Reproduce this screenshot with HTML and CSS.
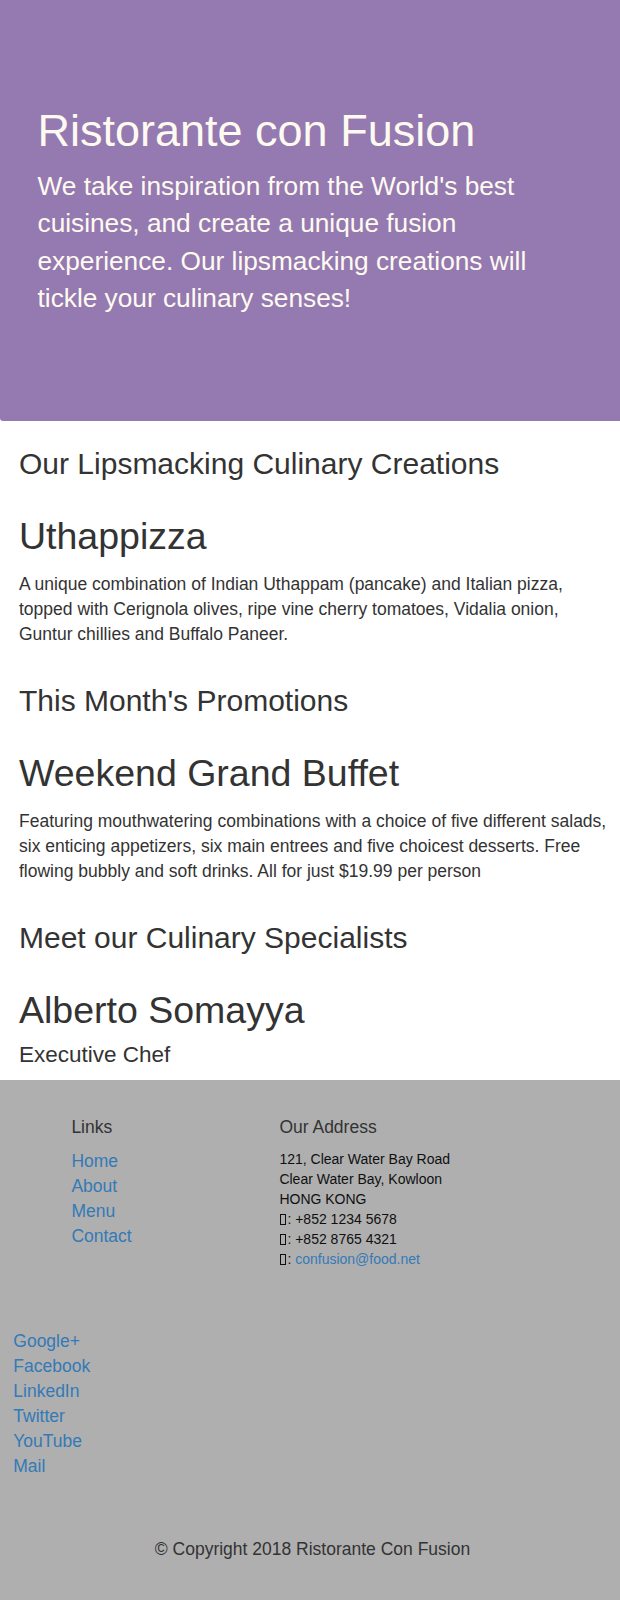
FILE: index.html
```html
<!DOCTYPE html>
<html lang="en">
<head>
<meta charset="utf-8">
<title>Ristorante con Fusion</title>
<link rel="stylesheet" href="styles.css">
</head>
<body>
<header class="jumbotron">
  <h1 class="jumbo-title">Ristorante con Fusion</h1>
  <p class="jumbo-lead">We take inspiration from the World's best cuisines, and create a unique fusion experience. Our lipsmacking creations will tickle your culinary senses!</p>
</header>

<main class="content">
  <section class="block">
    <h3 class="section-title">Our Lipsmacking Culinary Creations</h3>
    <h2 class="item-title">Uthappizza</h2>
    <p class="item-text">A unique combination of Indian Uthappam (pancake) and Italian pizza, topped with Cerignola olives, ripe vine cherry tomatoes, Vidalia onion, Guntur chillies and Buffalo Paneer.</p>
  </section>
  <section class="block">
    <h3 class="section-title spaced">This Month's Promotions</h3>
    <h2 class="item-title">Weekend Grand Buffet</h2>
    <p class="item-text">Featuring mouthwatering combinations with a choice of five different salads, six enticing appetizers, six main entrees and five choicest desserts. Free flowing bubbly and soft drinks. All for just $19.99 per person</p>
  </section>
  <section class="block">
    <h3 class="section-title spaced">Meet our Culinary Specialists</h3>
    <h2 class="item-title">Alberto Somayya</h2>
    <h4 class="item-sub">Executive Chef</h4>
  </section>
</main>

<footer class="footer">
  <div class="footer-cols">
    <div class="footer-col">
      <h5 class="footer-title">Links</h5>
      <ul class="link-list">
        <li><a href="#">Home</a></li>
        <li><a href="#">About</a></li>
        <li><a href="#">Menu</a></li>
        <li><a href="#">Contact</a></li>
      </ul>
    </div>
    <div class="footer-col">
      <h5 class="footer-title">Our Address</h5>
      <address class="address">
        121, Clear Water Bay Road<br>
        Clear Water Bay, Kowloon<br>
        HONG KONG<br>
        <span class="tofu"></span>: +852 1234 5678<br>
        <span class="tofu"></span>: +852 8765 4321<br>
        <span class="tofu"></span>: <a href="#">confusion@food.net</a>
      </address>
    </div>
  </div>
  <ul class="social-list">
    <li><a href="#">Google+</a></li>
    <li><a href="#">Facebook</a></li>
    <li><a href="#">LinkedIn</a></li>
    <li><a href="#">Twitter</a></li>
    <li><a href="#">YouTube</a></li>
    <li><a href="#">Mail</a></li>
  </ul>
  <p class="copyright">© Copyright 2018 Ristorante Con Fusion</p>
</footer>
</body>
</html>
```

FILE: styles.css
```css
* { box-sizing: border-box; }

html, body {
  margin: 0;
  padding: 0;
}

body {
  font-family: "Liberation Sans", Arial, Helvetica, sans-serif;
  font-size: 17.5px;
  line-height: 25px;
  color: #333333;
  background: #ffffff;
}

a {
  color: #337ab7;
  text-decoration: none;
}

/* Header */
.jumbotron {
  background: #947ab0;
  color: #fffaf0;
  padding: 106px 37.5px 103.5px 37.5px;
  border-bottom-left-radius: 3px;
}

.jumbo-title {
  margin: 0 0 12px 0;
  font-size: 45px;
  line-height: 1.1;
  font-weight: 500;
}

.jumbo-lead {
  margin: 0;
  font-size: 26.25px;
  line-height: 37.5px;
  font-weight: 400;
  max-width: 545px;
}

/* Main content */
.content {
  padding: 0 5px 11.6px 19px;
}

.section-title {
  margin: 25.5px 0 0 0;
  font-size: 30px;
  line-height: 33px;
  font-weight: 500;
}

.section-title.spaced {
  margin-top: 37px;
}

.item-title {
  margin: 36px 0 0 0;
  font-size: 37.5px;
  line-height: 41.25px;
  font-weight: 500;
}

.item-text {
  margin: 15px 0 0 0;
}

.item-sub {
  margin: 12px 0 0 0;
  font-size: 22.5px;
  line-height: 24.75px;
  font-weight: 500;
}

/* Footer */
.footer {
  background: #afafaf;
  padding: 38.5px 0 45px 0;
}

.footer-cols {
  display: grid;
  grid-template-columns: 208px 1fr;
  padding-left: 71.4px;
}

.footer-title {
  margin: 0 0 12px 0;
  font-size: 17.5px;
  line-height: 19.25px;
  font-weight: 500;
}

.link-list {
  list-style: none;
  margin: 0;
  padding: 0;
}

.address {
  font-style: normal;
  font-size: 14px;
  line-height: 20px;
  color: #0f0f0f;
  margin: 4.5px 0 0 0;
}

.tofu {
  display: inline-block;
  width: 6px;
  height: 11px;
  border: 1px solid #0f0f0f;
  vertical-align: -1px;
  margin-left: 1px;
  margin-right: 1px;
}

.social-list {
  list-style: none;
  margin: 60px 0 0 0;
  padding: 0 0 0 13.3px;
}

.copyright {
  margin: 58px 0 0 0;
  text-align: center;
  padding-left: 5px;
}
```
